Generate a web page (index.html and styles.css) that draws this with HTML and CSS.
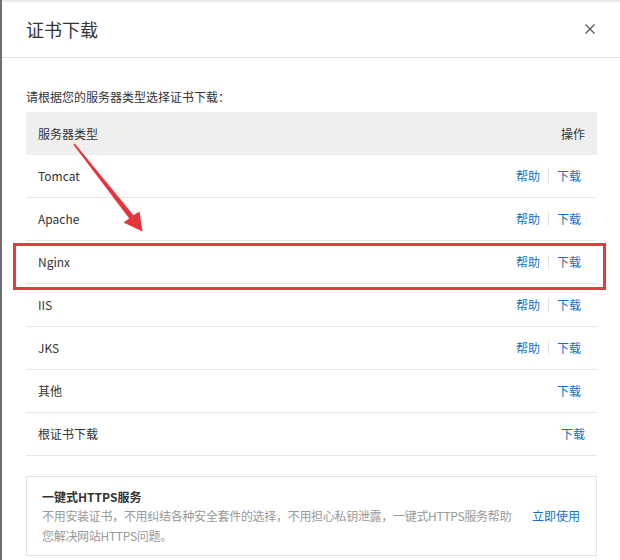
FILE: index.html
```html
<!DOCTYPE html>
<html lang="zh-CN">
<head>
<meta charset="utf-8">
<title>证书下载</title>
<link rel="stylesheet" href="styles.css">
</head>
<body>
<div class="screen">
  <div class="dialog">
    <div class="dlg-header">
      <h2 class="dlg-title">证书下载</h2>
      <button class="dlg-close" aria-label="关闭">
        <svg width="10" height="10" viewBox="0 0 10 10"><path d="M0.5 0.5L9.5 9.5M9.5 0.5L0.5 9.5" stroke="#555" stroke-width="1.2" fill="none"/></svg>
      </button>
    </div>
    <div class="dlg-body">
      <p class="hint">请根据您的服务器类型选择证书下载：</p>
      <div class="table">
        <div class="thead"><span>服务器类型</span><span>操作</span></div>
        <div class="row"><span class="name">Tomcat</span><span class="ops"><a class="link">帮助</a><i class="sep"></i><a class="link">下载</a></span></div>
        <div class="row"><span class="name">Apache</span><span class="ops"><a class="link">帮助</a><i class="sep"></i><a class="link">下载</a></span></div>
        <div class="row highlight"><span class="name">Nginx</span><span class="ops"><a class="link">帮助</a><i class="sep"></i><a class="link">下载</a></span></div>
        <div class="row"><span class="name">IIS</span><span class="ops"><a class="link">帮助</a><i class="sep"></i><a class="link">下载</a></span></div>
        <div class="row"><span class="name">JKS</span><span class="ops"><a class="link">帮助</a><i class="sep"></i><a class="link">下载</a></span></div>
        <div class="row"><span class="name">其他</span><span class="ops"><a class="link">下载</a></span></div>
        <div class="row row-root"><span class="name">根证书下载</span><span class="ops"><a class="link">下载</a></span></div>
      </div>
      <div class="promo">
        <div class="promo-text">
          <div class="promo-title">一键式HTTPS服务</div>
          <div class="promo-desc">不用安装证书，不用纠结各种安全套件的选择，不用担心私钥泄露，一键式HTTPS服务帮助<br>您解决网站HTTPS问题。</div>
        </div>
        <a class="link promo-link">立即使用</a>
      </div>
    </div>
  </div>
  <svg class="arrow" width="620" height="560" viewBox="0 0 620 560">
    <polygon points="73.3,144.6 74.7,143.4 133.5,215.2 139.5,211.5 142.5,231.5 123.5,222.5 129.2,218.6" fill="#e8353b"/>
  </svg>
</div>
</body>
</html>
```

FILE: styles.css
```css
* { box-sizing: border-box; }
html, body { margin: 0; padding: 0; }
body {
  width: 620px;
  height: 560px;
  overflow: hidden;
  background: #fff;
  font-family: "Noto Sans CJK SC", "Liberation Sans", sans-serif;
  font-size: 12px;
  color: #333;
}
.screen {
  position: relative;
  width: 620px;
  height: 560px;
}
.dialog {
  height: 560px;
  border-left: 2px solid #6e6e6e;
  background: linear-gradient(to bottom, #e2e2e2 0, #f6f6f6 2px, #fff 4px);
}
.dlg-header {
  height: 58px;
  display: flex;
  align-items: center;
  justify-content: space-between;
  padding: 0 25px 0 24px;
  border-bottom: 1px solid #e3e3e3;
}
.dlg-title {
  margin: 0;
  font-size: 18px;
  line-height: 24px;
  font-weight: normal;
  color: #333;
}
.dlg-close {
  border: 0;
  padding: 0;
  background: transparent;
  width: 10px;
  height: 10px;
  display: flex;
}
.dlg-body {
  padding: 0 23px 0 24px;
}
.hint {
  margin: 30px 0 6px;
  line-height: 18px;
  color: #333;
}
.table {
  display: flex;
  flex-direction: column;
}
.thead {
  height: 43px;
  background: #efefef;
  display: flex;
  align-items: center;
  justify-content: space-between;
  padding: 0 12px 0 12px;
  color: #333;
}
.row {
  height: 43px;
  display: flex;
  align-items: center;
  justify-content: space-between;
  padding: 0 16px 1px 12px;
  border-bottom: 1px solid #e6e6e6;
}
.row-root { padding-right: 12px; }
.name { color: #333; }
.ops {
  display: flex;
  align-items: center;
}
.link {
  color: #1470c8;
  text-decoration: none;
  cursor: pointer;
}
.sep {
  width: 1px;
  height: 14px;
  background: #e2e2e2;
  margin: 0 8px;
}
.highlight { position: relative; }
.highlight::after {
  content: "";
  position: absolute;
  left: -13px;
  right: -9px;
  top: 2px;
  height: 41px;
  border: 3px solid #e8393f;
}
.promo {
  margin-top: 20px;
  border: 1px solid #e3e3e3;
  padding: 11px 16px 9px 15px;
  display: flex;
  align-items: flex-start;
}
.promo-text { flex: 1; min-width: 0; }
.promo-title {
  font-weight: bold;
  line-height: 18px;
  color: #333;
}
.promo-desc {
  line-height: 20px;
  color: #999;
  white-space: nowrap;
  letter-spacing: -0.3px;
}
.promo-link {
  flex-shrink: 0;
  margin-left: 12px;
  margin-top: 18px;
  line-height: 20px;
}
.arrow {
  position: absolute;
  left: 0;
  top: 0;
  pointer-events: none;
}
```
